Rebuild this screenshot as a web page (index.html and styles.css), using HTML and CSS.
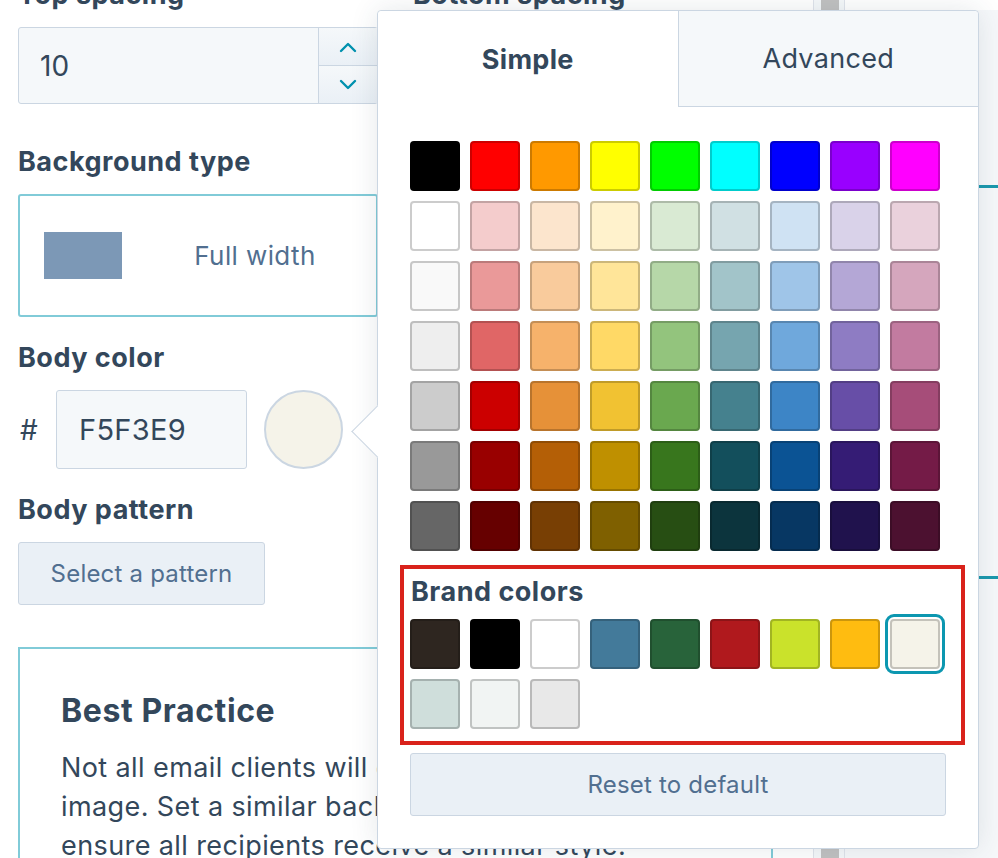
FILE: index.html
```html
<!DOCTYPE html>
<html lang="en">
<head>
    <meta charset="UTF-8">
    <meta name="viewport" content="width=device-width, initial-scale=1.0">
    <title>Email body settings</title>
    <link rel="stylesheet" href="styles.css">
</head>
<body>
    <div class="app">
        <div class="sidebar">
            <div class="panel">
                <div class="spacing-row">
                    <div class="field">
                        <div class="label">Top spacing</div>
                        <div class="number-input">
                            <span class="number-value">10</span>
                            <div class="stepper">
                                <span class="step"><svg width="20" height="12" viewBox="0 0 20 12"><path d="M3 10 L10 3 L17 10" /></svg></span>
                                <span class="step"><svg width="20" height="12" viewBox="0 0 20 12"><path d="M3 2 L10 9 L17 2" /></svg></span>
                            </div>
                        </div>
                    </div>
                    <div class="field">
                        <div class="label">Bottom spacing</div>
                        <div class="number-input">
                            <span class="number-value">10</span>
                            <div class="stepper">
                                <span class="step"><svg width="20" height="12" viewBox="0 0 20 12"><path d="M3 10 L10 3 L17 10" /></svg></span>
                                <span class="step"><svg width="20" height="12" viewBox="0 0 20 12"><path d="M3 2 L10 9 L17 2" /></svg></span>
                            </div>
                        </div>
                    </div>
                </div>

                <div class="field">
                    <div class="label">Background type</div>
                    <div class="type-row">
                        <div class="type-option selected">
                            <span class="type-preview"></span>
                            <span class="type-name">Full width</span>
                        </div>
                        <div class="type-option">
                            <span class="type-preview narrow"></span>
                            <span class="type-name">Content width</span>
                        </div>
                    </div>
                </div>

                <div class="field">
                    <div class="label">Body color</div>
                    <div class="color-row">
                        <span class="hash">#</span>
                        <div class="hex-input">F5F3E9</div>
                        <span class="color-dot"></span>
                    </div>
                </div>

                <div class="field">
                    <div class="label">Body pattern</div>
                    <button class="secondary-btn" type="button">Select a pattern</button>
                </div>

                <div class="tip">
                    <h2>Best Practice</h2>
                    <p>Not all email clients will display a background<br>image. Set a similar background color to<br>ensure all recipients receive a similar style.</p>
                </div>
            </div>
            <div class="scrollbar"><div class="thumb"></div></div>
        </div>

        <div class="preview">
            <div class="module-outline"></div>
        </div>

        <!-- color picker popover, opened from the body color dot -->
        <div class="popover">
            <span class="popover-arrow"></span>
            <div class="tabs">
                <div class="tab active">Simple</div>
                <div class="tab">Advanced</div>
            </div>
            <div class="popover-body">
                <div class="swatch-grid">
                    <span class="swatch" style="background:#000000"></span>
                    <span class="swatch" style="background:#ff0000"></span>
                    <span class="swatch" style="background:#ff9900"></span>
                    <span class="swatch" style="background:#ffff00"></span>
                    <span class="swatch" style="background:#00ff00"></span>
                    <span class="swatch" style="background:#00ffff"></span>
                    <span class="swatch" style="background:#0000ff"></span>
                    <span class="swatch" style="background:#9900ff"></span>
                    <span class="swatch" style="background:#ff00ff"></span>

                    <span class="swatch" style="background:#ffffff"></span>
                    <span class="swatch" style="background:#f4cccc"></span>
                    <span class="swatch" style="background:#fce5cd"></span>
                    <span class="swatch" style="background:#fff2cc"></span>
                    <span class="swatch" style="background:#d9ead3"></span>
                    <span class="swatch" style="background:#d0e0e3"></span>
                    <span class="swatch" style="background:#cfe2f3"></span>
                    <span class="swatch" style="background:#d9d2e9"></span>
                    <span class="swatch" style="background:#ead1dc"></span>

                    <span class="swatch" style="background:#f9f9f9"></span>
                    <span class="swatch" style="background:#ea9999"></span>
                    <span class="swatch" style="background:#f9cb9c"></span>
                    <span class="swatch" style="background:#ffe599"></span>
                    <span class="swatch" style="background:#b6d7a8"></span>
                    <span class="swatch" style="background:#a2c4c9"></span>
                    <span class="swatch" style="background:#9fc5e8"></span>
                    <span class="swatch" style="background:#b4a7d6"></span>
                    <span class="swatch" style="background:#d5a6bd"></span>

                    <span class="swatch" style="background:#eeeeee"></span>
                    <span class="swatch" style="background:#e06666"></span>
                    <span class="swatch" style="background:#f6b26b"></span>
                    <span class="swatch" style="background:#ffd966"></span>
                    <span class="swatch" style="background:#93c47d"></span>
                    <span class="swatch" style="background:#76a5af"></span>
                    <span class="swatch" style="background:#6fa8dc"></span>
                    <span class="swatch" style="background:#8e7cc3"></span>
                    <span class="swatch" style="background:#c27ba0"></span>

                    <span class="swatch" style="background:#cccccc"></span>
                    <span class="swatch" style="background:#cc0000"></span>
                    <span class="swatch" style="background:#e69138"></span>
                    <span class="swatch" style="background:#f1c232"></span>
                    <span class="swatch" style="background:#6aa84f"></span>
                    <span class="swatch" style="background:#45818e"></span>
                    <span class="swatch" style="background:#3d85c6"></span>
                    <span class="swatch" style="background:#674ea7"></span>
                    <span class="swatch" style="background:#a64d79"></span>

                    <span class="swatch" style="background:#999999"></span>
                    <span class="swatch" style="background:#990000"></span>
                    <span class="swatch" style="background:#b45f06"></span>
                    <span class="swatch" style="background:#bf9000"></span>
                    <span class="swatch" style="background:#38761d"></span>
                    <span class="swatch" style="background:#134f5c"></span>
                    <span class="swatch" style="background:#0b5394"></span>
                    <span class="swatch" style="background:#351c75"></span>
                    <span class="swatch" style="background:#741b47"></span>

                    <span class="swatch" style="background:#666666"></span>
                    <span class="swatch" style="background:#660000"></span>
                    <span class="swatch" style="background:#783f04"></span>
                    <span class="swatch" style="background:#7f6000"></span>
                    <span class="swatch" style="background:#274e13"></span>
                    <span class="swatch" style="background:#0c343d"></span>
                    <span class="swatch" style="background:#073763"></span>
                    <span class="swatch" style="background:#20124d"></span>
                    <span class="swatch" style="background:#4c1130"></span>
                </div>

                <div class="brand">
                    <div class="brand-title">Brand colors</div>
                    <div class="swatch-grid">
                        <span class="swatch" style="background:#2e2620"></span>
                        <span class="swatch" style="background:#000000"></span>
                        <span class="swatch" style="background:#ffffff"></span>
                        <span class="swatch" style="background:#437a9a"></span>
                        <span class="swatch" style="background:#28633a"></span>
                        <span class="swatch" style="background:#b0191d"></span>
                        <span class="swatch" style="background:#cae22b"></span>
                        <span class="swatch" style="background:#ffbc10"></span>
                        <span class="swatch selected" style="background:#f5f3e9"></span>
                        <span class="swatch" style="background:#cfdedb"></span>
                        <span class="swatch" style="background:#f1f4f3"></span>
                        <span class="swatch" style="background:#e8e8e8"></span>
                    </div>
                </div>

                <button class="reset-btn" type="button">Reset to default</button>
            </div>
        </div>
    </div>
</body>
</html>
```

FILE: styles.css
```css
body {
    font-family: Inter, 'Noto Sans', sans-serif;
    margin: 0;
    height: 858px;
    overflow: hidden;
    background: #fff;
    color: #33475b;
}
.app {
    position: relative;
    display: flex;
    height: 858px;
}
.sidebar {
    display: flex;
    width: 845px;
    flex: none;
    background: #fff;
}
.panel {
    width: 755px;
    padding-left: 18px;
    margin-top: -21px;
}
.spacing-row {
    display: grid;
    grid-template-columns: 360px 360px;
    column-gap: 35px;
    margin-bottom: 42px;
}
.spacing-row .field {
    margin-bottom: 0;
}
.field {
    margin-bottom: 25px;
}
.label {
    font-size: 27px;
    font-weight: 700;
    letter-spacing: 0.5px;
    line-height: 32px;
    margin-bottom: 16px;
}
.number-input {
    display: flex;
    height: 77px;
    box-sizing: border-box;
    border: 1px solid #cbd6e2;
    border-radius: 3px;
    background: #f5f8fa;
}
.number-value {
    flex: 1;
    align-self: center;
    padding-left: 21px;
    font-size: 28px;
}
.stepper {
    display: flex;
    flex-direction: column;
    width: 58px;
    border-left: 1px solid #cbd6e2;
}
.step {
    flex: 1;
    display: flex;
    align-items: center;
    justify-content: center;
    background: linear-gradient(#f5f8fa, #eaf0f6);
}
.step + .step {
    border-top: 1px solid #cbd6e2;
}
.step path {
    fill: none;
    stroke: #0091ae;
    stroke-width: 2.4;
    stroke-linecap: round;
    stroke-linejoin: round;
}
.type-row {
    display: grid;
    grid-template-columns: 360px 360px;
    column-gap: 35px;
}
.type-option {
    display: flex;
    align-items: center;
    height: 123px;
    box-sizing: border-box;
    padding-left: 25px;
    border: 1px solid #cbd6e2;
    border-radius: 3px;
}
.type-option.selected {
    border: 2px solid #81cbd8;
    padding-left: 24px;
}
.type-preview {
    width: 78px;
    height: 47px;
    background: #7c98b6;
}
.type-preview.narrow {
    width: 44px;
    margin: 0 17px;
}
.type-name {
    flex: 1;
    text-align: center;
    font-size: 26px;
    letter-spacing: 0.4px;
    color: #516f90;
    padding-left: 12px;
}
.color-row {
    display: flex;
    align-items: center;
}
.hash {
    font-size: 28px;
    width: 38px;
    padding-left: 2px;
    box-sizing: border-box;
}
.hex-input {
    width: 191px;
    height: 79px;
    box-sizing: border-box;
    padding-left: 22px;
    display: flex;
    align-items: center;
    font-size: 29px;
    letter-spacing: 0.3px;
    background: #f5f8fa;
    border: 1px solid #cbd6e2;
    border-radius: 3px;
}
.color-dot {
    width: 79px;
    height: 79px;
    box-sizing: border-box;
    margin-left: 17px;
    border-radius: 50%;
    background: #f5f3e9;
    border: 2px solid #cbd6e2;
}
.secondary-btn {
    width: 247px;
    height: 63px;
    font-family: inherit;
    font-size: 24px;
    letter-spacing: 0.2px;
    color: #516f90;
    background: #eaf0f6;
    border: 1px solid #cbd6e2;
    border-radius: 3px;
}
.tip {
    margin-top: 42px;
    border: 2px solid #81cbd8;
    padding: 43px 41px 40px;
}
.tip h2 {
    margin: 0 0 18px;
    font-size: 32px;
    letter-spacing: 0.6px;
    line-height: 38px;
}
.tip p {
    margin: 0;
    font-size: 27px;
    letter-spacing: 0.4px;
    line-height: 39px;
}
.scrollbar {
    width: 30px;
    margin-left: 40px;
    border-left: 1px solid #dfe3eb;
    border-right: 1px solid #dfe3eb;
    background: #f5f8fa;
}
.thumb {
    width: 18px;
    height: 100%;
    margin-left: 7px;
    background: #c1c1c1;
}
.preview {
    flex: 1;
    background: #f6f8fa;
    border-top: 10px solid #fff;
    overflow: hidden;
}
.module-outline {
    margin-top: 175px;
    height: 388px;
    border-top: 3px solid #1b98ad;
    border-bottom: 3px solid #1b98ad;
}
.popover {
    position: absolute;
    left: 377px;
    top: 10px;
    width: 602px;
    height: 839px;
    box-sizing: border-box;
    background: #fff;
    border: 1px solid #cbd6e2;
    border-radius: 4px;
    box-shadow: 0 0 28px rgba(45, 62, 80, 0.12);
}
.popover-arrow {
    position: absolute;
    left: -19px;
    top: 402px;
    width: 36px;
    height: 36px;
    background: #fff;
    border-left: 1px solid #cbd6e2;
    border-bottom: 1px solid #cbd6e2;
    transform: rotate(45deg);
}
.tabs {
    display: flex;
    height: 96px;
}
.tab {
    flex: 1;
    display: flex;
    align-items: center;
    justify-content: center;
    font-size: 27px;
    letter-spacing: 0.3px;
    background: #f5f8fa;
    border-left: 1px solid #cbd6e2;
    border-bottom: 1px solid #cbd6e2;
    border-top-right-radius: 4px;
}
.tab.active {
    font-weight: 700;
    background: #fff;
    border: none;
    border-top-left-radius: 4px;
}
.popover-body {
    padding: 34px 0 0 32px;
}
.swatch-grid {
    display: grid;
    grid-template-columns: repeat(9, 50px);
    gap: 10px;
}
.swatch {
    width: 50px;
    height: 50px;
    box-sizing: border-box;
    border: 2px solid rgba(0, 0, 0, 0.2);
    border-radius: 4px;
}
.swatch.selected {
    outline: 3px solid #0c97b0;
    outline-offset: 2px;
    border-radius: 4px;
}
.brand {
    width: 565px;
    box-sizing: border-box;
    margin: 14px 0 0 -10px;
    padding: 8px 0 12px 6px;
    border: 4px solid #d9221b;
}
.brand-title {
    font-size: 27px;
    font-weight: 700;
    letter-spacing: 0.5px;
    line-height: 30px;
    margin: 0 0 12px 1px;
}
.reset-btn {
    display: block;
    width: 536px;
    height: 63px;
    margin-top: 8px;
    font-family: inherit;
    font-size: 24px;
    letter-spacing: 0.2px;
    color: #516f90;
    background: #eaf0f6;
    border: 1px solid #cbd6e2;
    border-radius: 3px;
}
```
